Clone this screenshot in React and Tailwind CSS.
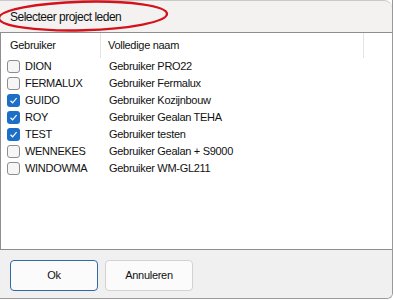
const users = [
  { code: "DION", name: "Gebruiker PRO22", checked: false },
  { code: "FERMALUX", name: "Gebruiker Fermalux", checked: false },
  { code: "GUIDO", name: "Gebruiker Kozijnbouw", checked: true },
  { code: "ROY", name: "Gebruiker Gealan TEHA", checked: true },
  { code: "TEST", name: "Gebruiker testen", checked: true },
  { code: "WENNEKES", name: "Gebruiker Gealan + S9000", checked: false },
  { code: "WINDOWMA", name: "Gebruiker WM-GL211", checked: false },
];

function Checkbox({ checked }) {
  if (checked) {
    return (
      <span className="w-[13px] h-[13px] rounded-[3px] bg-[#1c6ec6] flex items-center justify-center shrink-0">
        <svg width="9" height="9" viewBox="0 0 9 9">
          <path d="M1.5 4.8 L3.6 6.8 L7.6 2.2" fill="none" stroke="white" strokeWidth="1.2" />
        </svg>
      </span>
    );
  }
  return <span className="w-[13px] h-[13px] rounded-[3px] border border-[#8d8d8d] bg-[#f6f6f6] shrink-0" />;
}

export default function App() {
  return (
    <div
      className="relative w-[394px] h-[300px] bg-white text-[11px] text-[#111] tracking-[-0.3px]"
      style={{ fontFamily: '"Liberation Sans", Arial, sans-serif' }}
    >
      <div className="w-[393px] h-[299px] flex flex-col border-r border-b border-[#9a9a9a] rounded-br-[6px] overflow-hidden">
        {/* Title bar */}
        <div className="h-[32px] bg-[#f4f1f1] rounded-tr-[8px] border-t border-[#c9c9c9] flex items-center pl-[10px] text-[12px] tracking-[-0.5px]">
          Selecteer project leden
        </div>

        {/* List */}
        <div className="h-[218px] bg-white border-t border-b border-l border-[#8e8e8e]">
          <div className="flex h-[25px] items-center">
            <div className="w-[100px] h-full flex items-center pl-[9px] border-r border-[#e3e3e3]">Gebruiker</div>
            <div className="w-[263px] h-full flex items-center pl-[7px] border-r border-[#e3e3e3]">Volledige naam</div>
          </div>
          {users.map((u) => (
            <div key={u.code} className="flex h-[17px] items-center">
              <div className="w-[101px] flex items-center gap-[5px] pl-[6px]">
                <Checkbox checked={u.checked} />
                <span>{u.code}</span>
              </div>
              <div className="pl-[7px]">{u.name}</div>
            </div>
          ))}
        </div>

        {/* Footer */}
        <div className="flex-1 bg-[#f0f0f0] flex gap-[7px] pl-[10px] pt-[10px]">
          <button className="w-[88px] h-[31px] rounded-[4px] border border-[#2f6aa3] bg-[#fbfbfb]">
            Ok
          </button>
          <button className="w-[88px] h-[31px] rounded-[4px] border border-[#d2d2d2] bg-[#fbfbfb]">
            Annuleren
          </button>
        </div>
      </div>

      {/* Red annotation ellipse */}
      <svg className="absolute left-0 top-0 pointer-events-none" width="172" height="34" viewBox="0 0 172 34">
        <ellipse cx="83" cy="16" rx="84" ry="14.3" fill="none" stroke="#d3121b" strokeWidth="2.4" transform="rotate(-1.5 83 16)" />
      </svg>
    </div>
  );
}
